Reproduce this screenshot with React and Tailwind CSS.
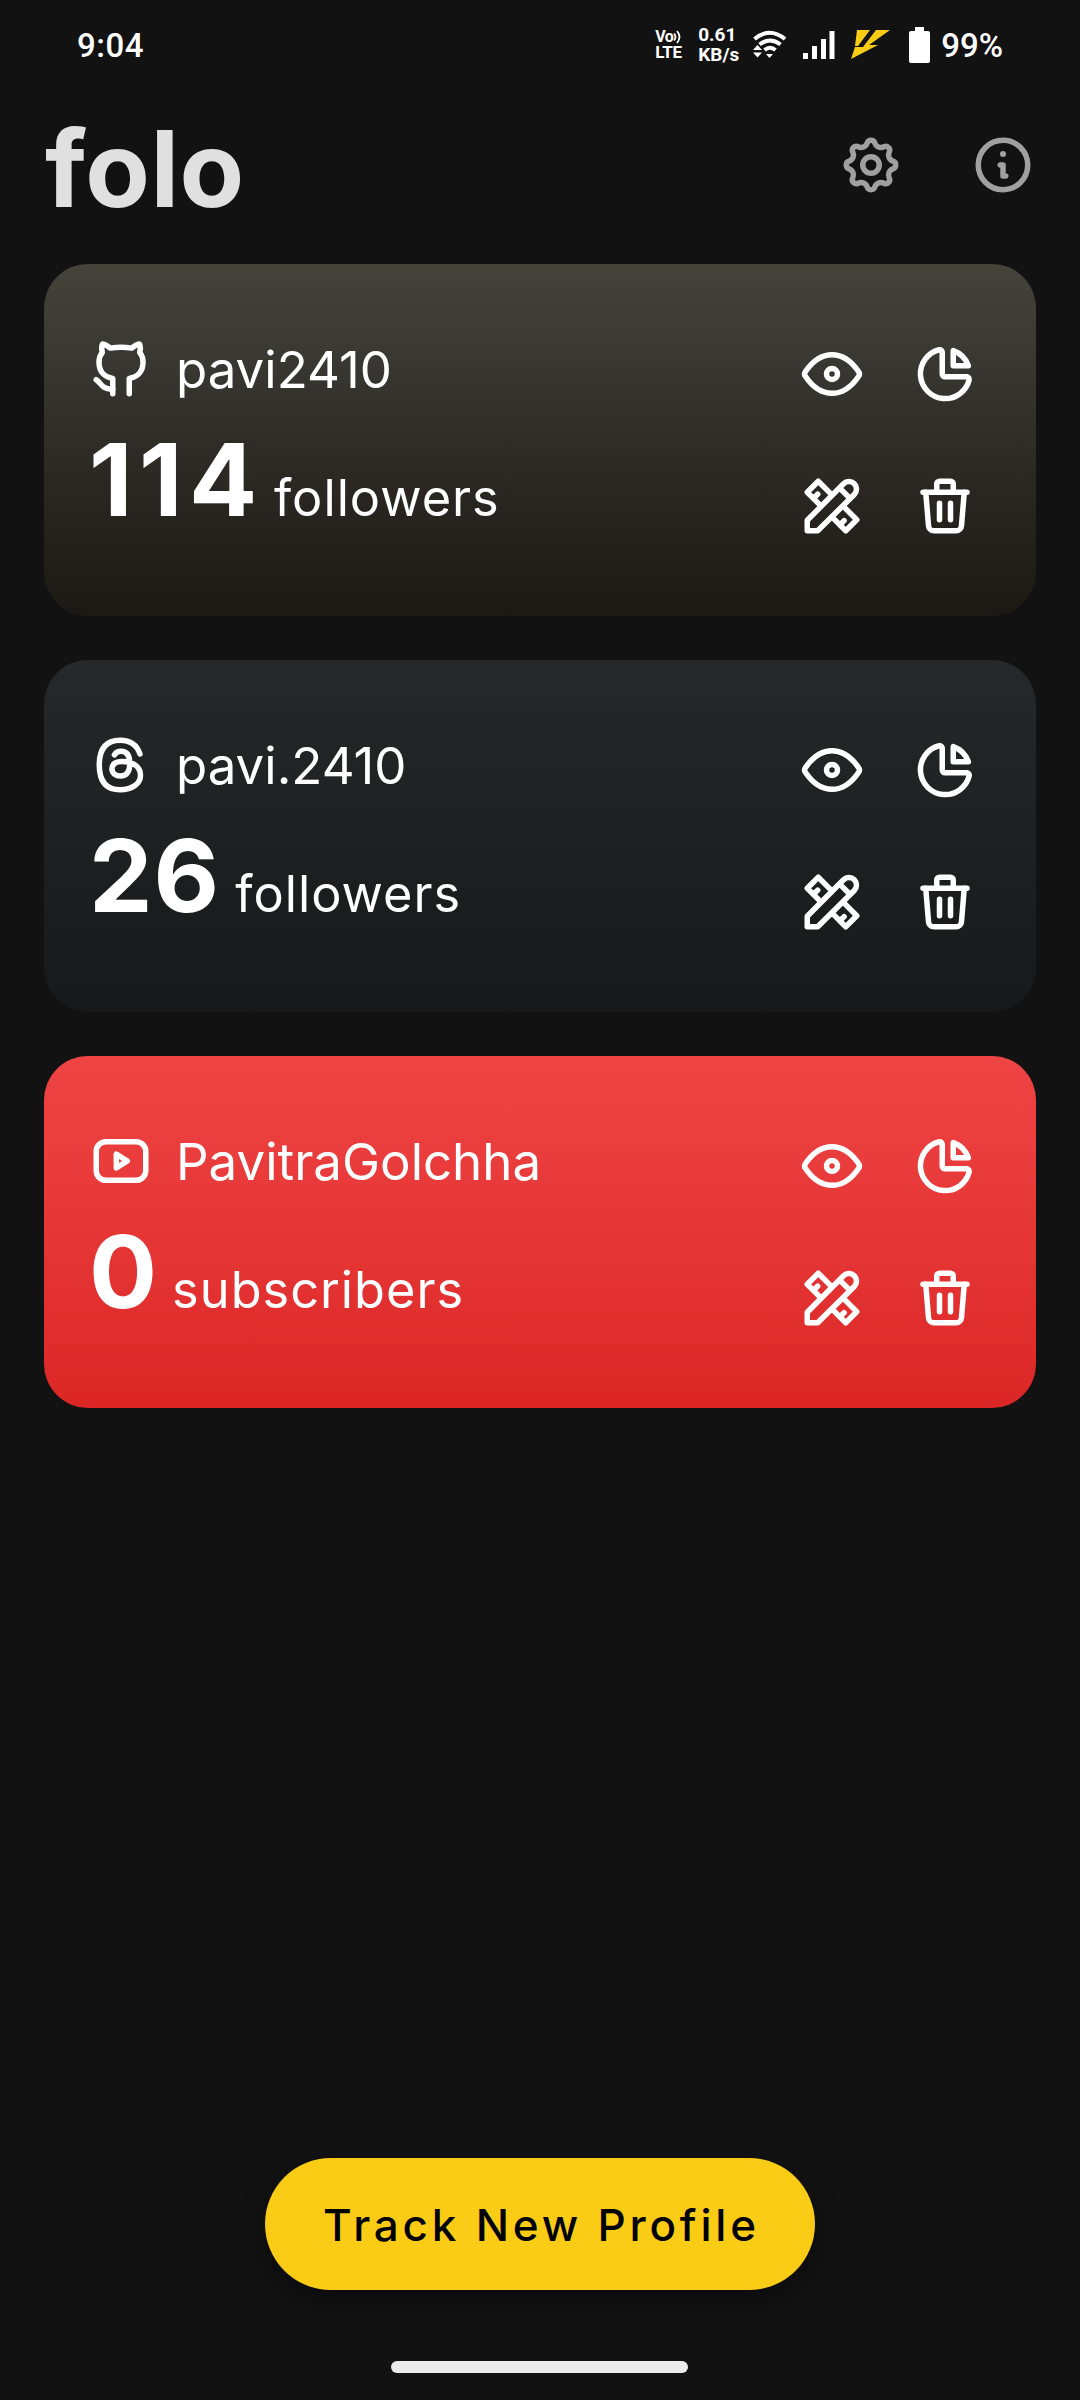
import React from "react";

// eight rounded teeth, one arc for the tip and one for the valley
const gearPath = () => {
  const pt = (deg) => {
    const a = (deg * Math.PI) / 180;
    return `${(12 + 8.12 * Math.cos(a)).toFixed(3)} ${(12 + 8.12 * Math.sin(a)).toFixed(3)}`;
  };
  let d = `M${pt(-9.76)}`;
  for (let i = 0; i < 8; i++) {
    d += `A1.45 1.45 0 0 1 ${pt(i * 45 + 9.76)}A2.36 2.36 0 0 0 ${pt(i * 45 + 35.24)}`;
  }
  return d + "z";
};

const Icon = ({ children }) => (
  <svg
    viewBox="0 0 24 24"
    className="size-[66px] shrink-0"
    fill="none"
    stroke="currentColor"
    strokeWidth="2"
    strokeLinecap="round"
    strokeLinejoin="round"
  >
    {children}
  </svg>
);

const SettingsIcon = () => (
  <Icon>
    <path d={gearPath()} />
    <circle cx="12" cy="12" r="3" />
  </Icon>
);

const InfoIcon = () => (
  <Icon>
    <circle cx="12" cy="12" r="9" />
    <path d="M11 12h1v4h1" />
    <circle cx="12" cy="8" r="1.1" fill="currentColor" stroke="none" />
  </Icon>
);

const EyeIcon = () => (
  <Icon>
    <path d="M2.3 11.2C4.6 7.8 8 5 12 5s7.4 2.8 9.7 6.2a1.4 1.4 0 0 1 0 1.6C19.4 16.2 16 19 12 19s-7.4-2.8-9.7-6.2a1.4 1.4 0 0 1 0-1.6z" />
    <circle cx="12" cy="12" r="2" />
  </Icon>
);

const PieIcon = () => (
  <Icon>
    <path d="M11 4a.9.9 0 0 0-1.1-.8 9 9 0 1 0 10.9 10.9A.9.9 0 0 0 20 13h-8a1 1 0 0 1-1-1z" />
    <path d="M15 3.5V9h5.5A9 9 0 0 0 15 3.5z" />
  </Icon>
);

const DesignIcon = () => (
  <Icon>
    <path d="M3 17.2 16.2 3.9a2.75 2.75 0 0 1 3.9 3.9L6.8 21H3z" />
    <path d="m14.8 5.5 3.7 3.7" />
    <path d="M7.5 11.5 3 7l4-4 4.5 4.5" />
    <path d="M16.5 12.5 21 17l-4 4-4.5-4.5" />
    <path d="m5.3 9.2 1.5-1.5M14.9 18.8l1.5-1.5" />
  </Icon>
);

const TrashIcon = () => (
  <Icon>
    <path d="M4 7h16M9 7V4a1 1 0 0 1 1-1h4a1 1 0 0 1 1 1v3" />
    <path d="m5 7 1 12.1A2 2 0 0 0 8 21h8a2 2 0 0 0 2-1.9L19 7" />
    <path d="M10 11v6M14 11v6" />
  </Icon>
);

const GithubIcon = () => (
  <Icon>
    <path d="M9 21v-5.6c-2.9-.5-5-2.4-5-5.9 0-1.4.4-2.6 1.2-3.5-.3-1-.3-2.2.1-3.1.9.1 1.9.7 2.8 1.5 2.4-.4 5.4-.4 7.8 0 .9-.8 1.9-1.4 2.8-1.5.4.9.4 2.1.1 3.1.8.9 1.2 2.1 1.2 3.5 0 3.5-2.1 5.4-5 5.9V21" />
    <path d="M3 15.9c1.6.8 1.9 3.7 6 3.4" />
  </Icon>
);

const ThreadsIcon = () => (
  <Icon>
    <path d="M18.9 8C17.8 4.7 15.5 3 11.7 3 6.6 3 4.1 6 4.1 12s2.5 9 7.6 9c4.5 0 7.4-2.3 7.4-5.3 0-3.3-2.9-5-6.8-5-2.4 0-3.6 1.1-3.6 2.7s1.3 2.6 3.1 2.6c2.2 0 3.4-1.6 3.4-4.5 0-3-1-4.5-3.2-4.5-1.1 0-1.9.4-2.4 1.3" />
  </Icon>
);

const YoutubeIcon = () => (
  <Icon>
    <rect x="3" y="5" width="18" height="14" rx="3.5" />
    <path d="M10.3 9.5v5l4-2.5z" />
  </Icon>
);

const profiles = [
  {
    name: "pavi2410",
    count: 114,
    unit: "followers",
    icon: GithubIcon,
    gradient: "from-[#44443b] via-[#302d29] to-[#1c1915]",
    spacing: "tracking-[6.5px] -mr-[5px]",
  },
  {
    name: "pavi.2410",
    count: 26,
    unit: "followers",
    icon: ThreadsIcon,
    gradient: "from-[#27282a] to-[#17181a]",
    spacing: "tracking-[1px]",
  },
  {
    name: "PavitraGolchha",
    count: 0,
    unit: "subscribers",
    icon: YoutubeIcon,
    gradient: "from-[#ef4444] to-[#dc2626]",
    spacing: "tracking-normal",
  },
];

const ProfileCard = ({ name, count, unit, icon: Logo, gradient, spacing }) => (
  <div
    className={`h-[352px] rounded-[44px] bg-gradient-to-b pl-11 pr-[58px] flex justify-between text-white ${gradient}`}
  >
    <div className="pt-[72px]">
      <div className="flex items-center gap-[22px] h-[66px]">
        <Logo />
        <span className="text-[51px] leading-none">{name}</span>
      </div>
      <div className="flex items-baseline gap-[15px] mt-[17px] pl-px">
        <span className={`text-[101px] leading-[120px] font-[650] [font-kerning:none] ${spacing}`}>{count}</span>
        <span className="text-[50.5px] leading-none tracking-[1px]">{unit}</span>
      </div>
    </div>
    <div className="grid grid-cols-2 gap-x-[47px] gap-y-[66px] pt-[77px] content-start">
      <EyeIcon />
      <PieIcon />
      <DesignIcon />
      <TrashIcon />
    </div>
  </div>
);

const StatusBar = () => (
  <div className="h-[90px] px-[77px] flex items-center justify-between font-[Roboto,sans-serif] font-medium text-white">
    <span className="text-[33px] leading-none tracking-[0.5px]">9:04</span>
    <div className="flex items-center">
      <div className="w-[29px] font-bold">
        <div className="flex items-center h-[15px]">
          <span className="text-[16px] leading-[15px] tracking-[-0.5px]">Vo</span>
          <svg viewBox="0 0 9 14" className="w-[9px] h-3.5" fill="none" stroke="currentColor" strokeWidth="1.8">
            <path d="M1 3.5q3 3.5 0 7M4 1q5 6 0 12" />
          </svg>
        </div>
        <div className="text-[17px] leading-[17px] tracking-[-0.3px]">LTE</div>
      </div>
      <div className="ml-[14px] w-[42px] text-[19px] leading-5 font-bold">
        <div>0.61</div>
        <div>KB/s</div>
      </div>
      <svg viewBox="0 0 34 30" className="ml-[13px] w-[34px] h-[30px]" fill="none" stroke="currentColor" strokeWidth="4">
        <path d="M1.5 9q15-12.5 30.5 0M6.5 14.5q10.5-8 21 0M11.5 20q5.5-4.5 11 0" />
        <path d="M0 20h9l-4.5-5zM0 22.5h9l-4.5 5zM13 24h7l-3.5 4z" fill="currentColor" stroke="none" />
      </svg>
      <svg viewBox="0 0 32 28" className="ml-4 w-8 h-7" fill="currentColor">
        <path d="M0 22h5v6H0zM9 15h5v13H9zM18 8h5v20h-5zM26.5 0h5v28h-5z" />
      </svg>
      <svg viewBox="0 0 40 30" className="ml-4 w-10 h-[30px]" fill="#facc15">
        <path d="M6 0h13L7 16H4zM25 0h14L18 15h9L0 29 4 17h8z" />
      </svg>
      <svg viewBox="0 0 21 36" className="ml-[18px] w-[21px] h-9" fill="currentColor">
        <path d="M6 0h9v4h4a2 2 0 0 1 2 2v28a2 2 0 0 1-2 2H2a2 2 0 0 1-2-2V6a2 2 0 0 1 2-2h4z" />
      </svg>
      <span className="ml-[11px] text-[33px] leading-none">99%</span>
    </div>
  </div>
);

export default function App() {
  return (
    <div className="w-[1080px] h-[2400px] bg-[#121212] flex flex-col font-[Inter,sans-serif]">
      <StatusBar />
      <header className="h-[174px] px-11 flex items-start justify-between">
        <h1 className="mt-[19px] pl-px text-[105.5px] leading-[120px] font-[650] tracking-[0.5px] text-[#e0e0e0]">
          folo
        </h1>
        <div className="mt-[42px] flex gap-[66px] text-[#a0a0a0]">
          <SettingsIcon />
          <InfoIcon />
        </div>
      </header>

      <main className="px-11 flex flex-col gap-11">
        {profiles.map((p) => (
          <ProfileCard key={p.name} {...p} />
        ))}
      </main>

      <div className="mt-auto flex flex-col items-center">
        <button className="w-[550px] h-[132px] pt-0.5 pl-[3px] rounded-full bg-[#facc15] text-black text-[44px] leading-none font-medium tracking-[3.8px] shadow-[0_10px_24px_rgba(0,0,0,0.4)]">
          Track New Profile
        </button>
        <div className="mt-[71px] mb-[27px] mr-px w-[297px] h-3 rounded-full bg-[#ebebeb]" />
      </div>
    </div>
  );
}
